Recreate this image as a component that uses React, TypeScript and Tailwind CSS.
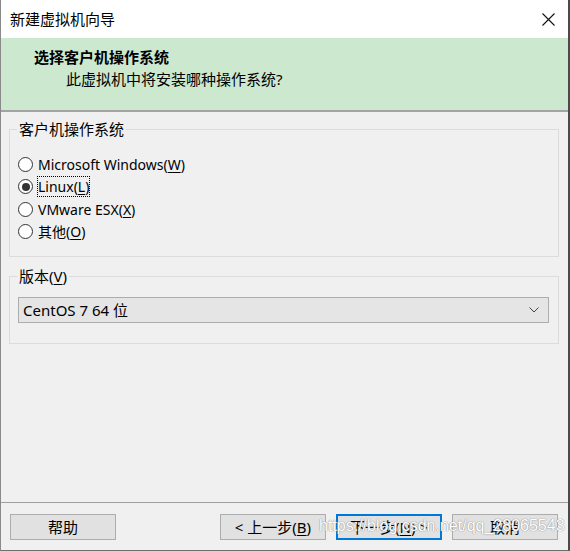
import React from "react";

const font = "font-['Noto_Sans','Noto_Sans_CJK_SC',sans-serif]";

function Radio({ checked, children, focused }: { checked?: boolean; children: React.ReactNode; focused?: boolean }) {
  return (
    <div className="flex h-[22.5px] items-center gap-[4px]">
      <span className="flex h-[15px] w-[15px] shrink-0 items-center justify-center rounded-full border border-[#333] bg-white">
        {checked && <span className="h-[8px] w-[8px] rounded-full bg-[#333]" />}
      </span>
      <span
        className={
          focused
            ? "flex h-[21px] items-center border border-dotted border-black text-[14px] leading-[15px] text-black"
            : "flex h-[21px] items-center border border-transparent text-[14px] leading-[15px] text-black"
        }
      >
        {children}
      </span>
    </div>
  );
}

function Button({ children, primary }: { children: React.ReactNode; primary?: boolean }) {
  return (
    <button
      type="button"
      className={
        primary
          ? "flex h-[26px] w-[106px] items-center justify-center border-2 border-[#0078d7] bg-[#e1e1e1] text-[15px] leading-[15px] text-black"
          : "flex h-[26px] w-[106px] items-center justify-center border border-[#adadad] bg-[#e1e1e1] text-[15px] leading-[15px] text-black"
      }
    >
      {children}
    </button>
  );
}

export default function App() {
  return (
    <div className={`${font} relative flex h-[551px] w-[570px] flex-col border-b border-l border-r-2 border-b-[#6f6f6f] border-l-[#8a8a8a] border-r-[#4a4a4a] bg-[#f0f0f0] text-black`}>
      {/* title bar */}
      <div className="flex h-[38px] shrink-0 items-center justify-between bg-white pl-[9px] pr-[13px]">
        <span className="text-[15px] leading-[15px]">新建虚拟机向导</span>
        <svg width="13" height="13" viewBox="0 0 13 13" className="mt-[1px]">
          <path d="M0.5 0.5 L12.5 12.5 M12.5 0.5 L0.5 12.5" stroke="#111" strokeWidth="1.1" />
        </svg>
      </div>

      {/* header */}
      <div className="flex h-[74px] shrink-0 flex-col border-b-2 border-[#a3a3a3] bg-[#cce8cf] pt-[10px]">
        <div className="pl-[33px] text-[15px] font-bold leading-[18px]">选择客户机操作系统</div>
        <div className="mt-[4px] pl-[65px] text-[15px] leading-[18px]">此虚拟机中将安装哪种操作系统?</div>
      </div>

      {/* body */}
      <div className="flex flex-1 flex-col pl-[8px] pt-[10px]">
        <fieldset className="w-[550px] border border-[#dcdcdc] pb-[13px] pl-[8px] pt-[16px]">
          <legend className="ml-[-1px] px-[2px] text-[15px] leading-[15px]">客户机操作系统</legend>
          <Radio>
            Microsoft Windows(<span className="underline underline-offset-2">W</span>)
          </Radio>
          <Radio checked focused>
            Linux(<span className="underline underline-offset-2">L</span>)
          </Radio>
          <Radio>
            VMware ESX(<span className="underline underline-offset-2">X</span>)
          </Radio>
          <Radio>
            其他(<span className="underline underline-offset-2">O</span>)
          </Radio>
        </fieldset>

        <fieldset className="mt-[12px] w-[550px] border border-[#dcdcdc] pb-[20px] pl-[8px] pr-[9px] pt-[13px]">
          <legend className="ml-[-1px] px-[2px] text-[15px] leading-[15px]">
            版本(<span className="underline underline-offset-2">V</span>)
          </legend>
          <div className="flex h-[26px] items-center justify-between border border-[#adadad] bg-[#e5e5e5] pl-[4px] pr-[9px]">
            <span className="text-[15px] leading-[15px]">CentOS 7 64 位</span>
            <svg width="10" height="6" viewBox="0 0 10 6">
              <path d="M0.5 0.5 L5 5 L9.5 0.5" fill="none" stroke="#444" strokeWidth="1" />
            </svg>
          </div>
        </fieldset>
      </div>

      {/* footer */}
      <div className="flex h-[48px] shrink-0 items-start justify-between border-t border-[#a0a0a0] pl-[9px] pr-[10px] pt-[11px]">
        <Button>帮助</Button>
        <div className="flex gap-[10px]">
          <Button>
            &lt; 上一步(<span className="underline underline-offset-2">B</span>)
          </Button>
          <Button primary>
            下一步(<span className="underline underline-offset-2">N</span>) &gt;
          </Button>
          <Button>取消</Button>
        </div>
      </div>

      {/* watermark */}
      <div className="pointer-events-none absolute left-[318px] top-[517px] font-['Liberation_Sans',sans-serif] text-[16px] leading-[18px] text-white [text-shadow:0_0_1px_#8a8a8a,0_0_1px_#8a8a8a]">
        https://blog.csdn.net/qq_28065543
      </div>
    </div>
  );
}
